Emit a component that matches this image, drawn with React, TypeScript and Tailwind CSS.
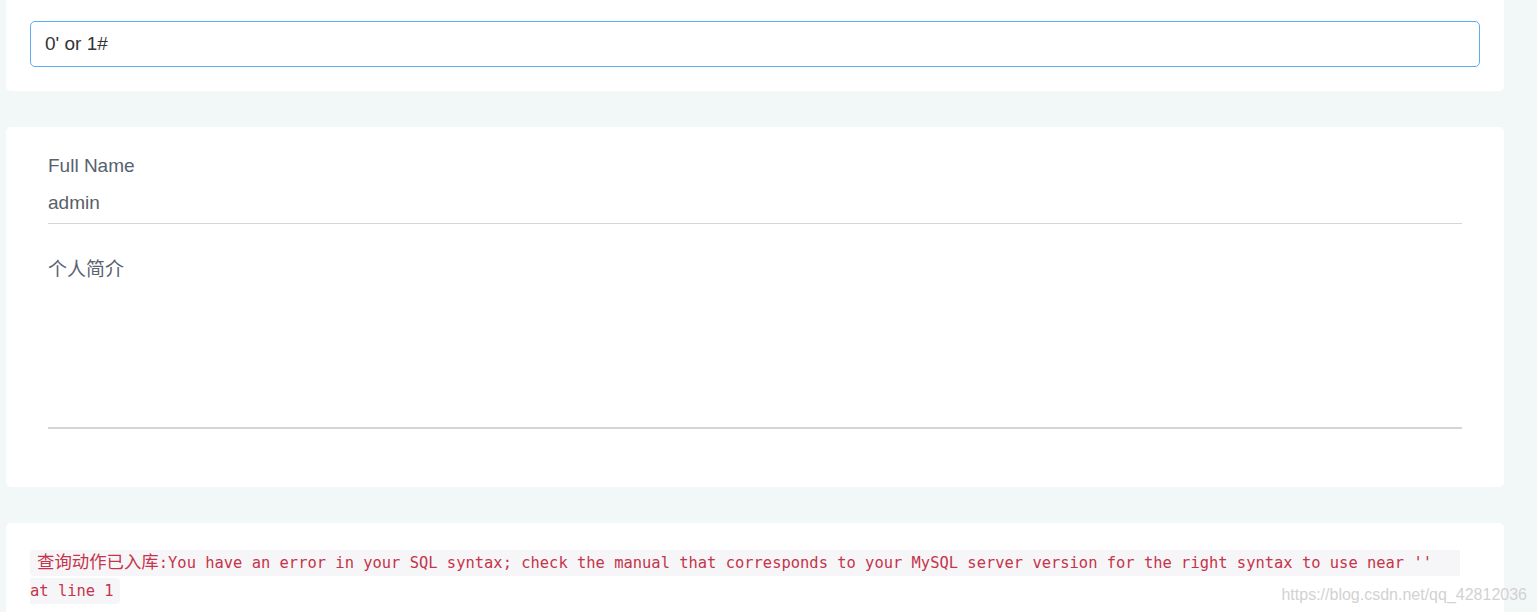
import { useState } from "react";

const SANS = "font-['Liberation_Sans','Noto_Sans_CJK_SC',sans-serif]";

function Card({ className, children }: { className?: string; children: React.ReactNode }) {
  return <section className={"bg-white px-[24px] " + (className ?? "")}>{children}</section>;
}

export default function App() {
  const [query, setQuery] = useState("0' or 1#");

  return (
    <main className={"relative min-h-screen w-full overflow-hidden bg-[#f2f7f7] pl-[6px] pr-[33px] " + SANS}>
      {/* search box, top of card is scrolled off */}
      <Card className="rounded-b-[5px] pt-[21px] pb-[24px]">
        <input
          value={query}
          onChange={(e) => setQuery(e.target.value)}
          className="block h-[46px] w-full rounded-[5px] border border-[#5eadf0] px-[14px] text-[19px] text-[#333] outline-none"
        />
      </Card>

      {/* profile */}
      <Card className="mt-[36px] rounded-[5px] pt-[27px] pb-[58px]">
        <div className="px-[18px]">
          <div className="text-[19px] leading-[24px] text-[#566270]">Full Name</div>
          <div className="mt-[13px] border-b border-[#d6d6d6] pb-[8px] text-[19px] leading-[24px] text-[#595f66]">
            admin
          </div>
          <div className="mt-[34px] h-[171px] border-b-2 border-[#d4d4d4] text-[19px] leading-[24px] text-[#5a6370]">
            个人简介
          </div>
        </div>
      </Card>

      {/* sql result */}
      <Card className="mt-[36px] rounded-t-[5px] pt-[24px] pb-[30px]">
        <p className="leading-[28px]">
          <code className="rounded-[4px] bg-[#f6f6f8] py-[4px] pl-[7px] pr-[6px] font-['DejaVu_Sans_Mono',monospace] text-[15.45px] text-[#c5344a]">
            <span className="font-['Noto_Sans_CJK_SC',sans-serif] text-[17.4px]">查询动作已入库</span>
            :You have an error in your SQL syntax; check the manual that corresponds to your MySQL server version
            for the right syntax to use near ''{"\u00a0\u00a0\u00a0"}
            <br />
            at line 1
          </code>
        </p>
      </Card>

      <span className="absolute right-[10px] top-[583px] text-[16px] text-[#d2d2d2]">
        https://blog.csdn.net/qq_42812036
      </span>
    </main>
  );
}
